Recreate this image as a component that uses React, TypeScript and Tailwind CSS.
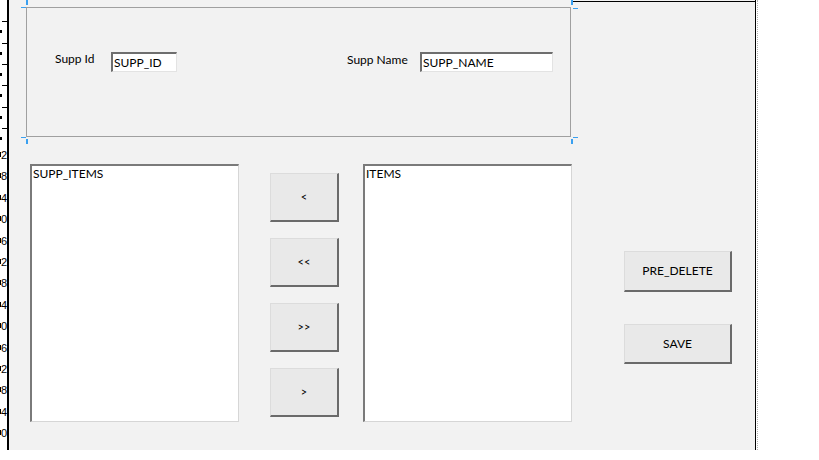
import React from "react";

const font = { fontFamily: "Lato, 'Liberation Sans', sans-serif" };

function Ruler() {
  const nums = [2, 8, 4, 0, 6, 2, 8, 4, 0, 6, 2, 8, 4, 0];
  const ticks = [21, 43, 64, 85, 107, 128];
  return (
    <div className="relative w-[7px] h-[450px] overflow-hidden bg-white">
      {ticks.map((t) => (
        <div key={t} className="absolute left-[2px] w-[5px] h-px bg-black" style={{ top: t }} />
      ))}
      {ticks.map((t) => (
        <div key={"f" + t} className="absolute left-0 w-[2px] h-[3px] bg-black" style={{ top: t + 9 }} />
      ))}
      {nums.map((n, i) => (
        <div key={i} className="absolute left-0 w-px h-[5px] bg-black" style={{ top: 152 + i * 21.4 }} />
      ))}
      {nums.map((n, i) => (
        <div
          key={"n" + i}
          className="absolute right-0 text-[11px] leading-[12px] text-black whitespace-nowrap"
          style={{ top: 149 + i * 21.4, fontFamily: "'Liberation Sans', sans-serif" }}
        >
          {n}
        </div>
      ))}
    </div>
  );
}

function Field({ w, text }: { w: string; text: string }) {
  return (
    <div
      className={`${w} h-[20px] bg-white border-t-2 border-l-2 border-r border-b border-t-[#6e6e6e] border-l-[#6e6e6e] border-r-[#e3e3e3] border-b-[#e3e3e3] pl-[1px] text-[12px] leading-[17px] text-black`}
    >
      {text}
    </div>
  );
}

function Btn({ label, cls, size }: { label: string; cls: string; size: string }) {
  return (
    <div
      className={`${cls} flex items-center justify-center bg-[#e9e9e9] border-t border-l border-r-2 border-b-2 border-t-[#dcdcdc] border-l-[#dcdcdc] border-r-[#6a6a6a] border-b-[#6a6a6a] ${size} text-black`}
    >
      {label}
    </div>
  );
}

function ListBox({ text }: { text: string }) {
  return (
    <div className="w-[209px] h-[258px] bg-white border-t-2 border-l-2 border-r border-b border-t-[#7a7a7a] border-l-[#7a7a7a] border-r-[#d6d6d6] border-b-[#d6d6d6] pl-[1px] pt-[1px] text-[12px] leading-[14px] text-black">
      {text}
    </div>
  );
}

export default function App() {
  return (
    <div className="flex w-[819px] h-[460px] bg-white" style={font}>
      <Ruler />
      <div className="w-[2px] h-[450px] bg-black" />
      <div className="relative w-[746px] h-[450px] bg-[#f2f2f2] flex flex-col">
        <div className="absolute left-[564px] top-[1px] w-[182px] h-px bg-black" />
        {/* group box */}
        <div className="relative ml-[17px] mt-[7px] w-[545px] h-[130px] border border-[#a0a0a0]">
          <div className="absolute left-[-6px] top-[-1px] w-[5px] h-px bg-[#3aa0f0]" />
          <div className="absolute left-[-1px] top-[-8px] w-[2px] h-[5px] bg-[#3aa0f0]" />
          <div className="absolute left-[-6px] bottom-[-2px] w-[5px] h-px bg-[#3aa0f0]" />
          <div className="absolute left-[-1px] bottom-[-8px] w-[2px] h-[5px] bg-[#3aa0f0]" />
          <div className="absolute right-[-8px] top-0 w-[5px] h-px bg-[#3aa0f0]" />
          <div className="absolute right-[-3px] top-[-8px] w-[2px] h-[5px] bg-[#3aa0f0]" />
          <div className="absolute right-[-8px] bottom-[-2px] w-[5px] h-px bg-[#3aa0f0]" />
          <div className="absolute right-[-3px] bottom-[-8px] w-[2px] h-[5px] bg-[#3aa0f0]" />
          <div className="flex items-center mt-[44px] ml-[28px] h-[20px]">
            <div className="w-[56px] text-[12px] leading-[14px] text-black -mt-[7px]">Supp Id</div>
            <Field w="w-[66px]" text="SUPP_ID" />
            <div className="ml-[170px] w-[73px] text-[12px] leading-[14px] text-black -mt-[4px]">Supp Name</div>
            <Field w="w-[133px]" text="SUPP_NAME" />
          </div>
        </div>
        {/* lists row */}
        <div className="flex items-start mt-[27px]">
          <div className="ml-[21px]">
            <ListBox text="SUPP_ITEMS" />
          </div>
          <div className="ml-[31px] pt-[9px] flex flex-col gap-[16px]">
            <Btn label="<" cls="w-[69px] h-[49px]" size="text-[11px]" />
            <Btn label="<<" cls="w-[69px] h-[49px]" size="text-[11px]" />
            <Btn label=">>" cls="w-[69px] h-[49px]" size="text-[11px]" />
            <Btn label=">" cls="w-[69px] h-[49px]" size="text-[11px]" />
          </div>
          <div className="ml-[24px]">
            <ListBox text="ITEMS" />
          </div>
          <div className="ml-[52px] mt-[87px] flex flex-col gap-[32px]">
            <Btn label="PRE_DELETE" cls="w-[108px] h-[41px]" size="text-[12px]" />
            <Btn label="SAVE" cls="w-[108px] h-[40px]" size="text-[12px]" />
          </div>
        </div>
      </div>
      <div className="w-px h-[450px] bg-black" />
      <div className="w-px h-[450px] bg-white" />
      <div className="w-px h-[450px] border-l border-dotted border-[#b0b0b0]" />
    </div>
  );
}
